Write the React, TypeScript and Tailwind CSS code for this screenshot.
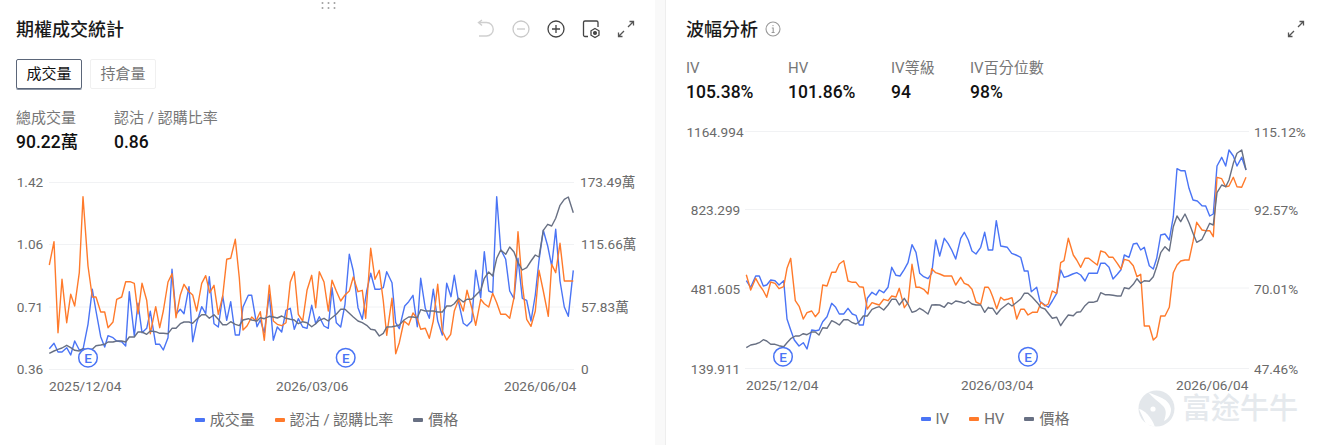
import React from "react";

const BLUE = "#4a74f5";
const ORANGE = "#ff7a2b";
const GRAY = "#687083";

// Traced data: each string is x,y pairs on a 3x grid; ox/oy place it inside the chart.
const pts = (parts: [string, number, number][]) =>
  parts
    .map(([s, ox, oy]) =>
      s
        .trim()
        .split(/\s+/)
        .map((p) => {
          const [x, y] = p.split(",").map(Number);
          return `${(x / 3 + ox).toFixed(1)},${(y / 3 + oy).toFixed(1)}`;
        })
        .join(" ")
    )
    .join(" ");

const L1 = {
  blue: pts([
    ["148,533 162,517 174,543 186,543 200,530 212,552 224,510 238,537 249,535 264,460 277,355 288,420 302,497 314,528 324,494 339,500 350,510 365,512 377,525 388,362 403,495 414,397 426,485 440,472 451,421 467,520 479,520 490,537 504,500 516,295 528,430 541,415 552,428 567,347 578,512 590,455 605,407 617,428 628,317 642,458 655,468 668,375 680,448 692,392 706,492 718,492 729,408 745,373 755,373 771,467 781,447 793,485 808,370 820,508 832,468 845,483 858,418 871,412 883,475 895,443 908,468 921,472 935,403 947,458 958,437 972,465 985,472", 0, 0],
    ["6,350 19,455 32,468 45,400 58,250 70,300 84,410 97,445 110,360 122,307 135,355 148,355 160,350 170,302 186,335 197,455 208,473 224,405 236,392 249,373 262,467 272,322 286,412 298,442 310,355 323,450 337,492 350,337 363,377 373,313 386,395 400,457 411,465 425,450 437,298 452,380 463,242 476,360 488,365 500,77 512,235 527,265 539,360 552,383 564,262 577,382 590,388 603,450 616,372 627,268 640,178 653,225 665,285 677,175 690,330 703,408 715,436 730,298", 330, 0],
  ]),
  orange: pts([
    ["148,282 162,212 174,485 186,325 200,455 212,370 224,405 238,305 249,77 264,285 277,378 288,378 302,423 314,423 324,470 339,453 350,385 365,378 377,332 390,332 403,337 414,428 426,337 440,388 451,488 467,407 479,470 490,420 504,333 516,308 528,440 541,372 552,340 565,360 578,372 590,420 605,337 617,314 629,365 642,343 655,430 668,375 680,265 692,262 706,205 718,320 729,477 741,465 755,438 768,450 781,422 793,508 808,343 820,450 832,460 845,464 858,455 871,333 883,302 895,430 908,450 921,358 935,313 947,410 958,302 972,333 985,420", 0, 0],
    ["6,328 19,360 32,390 45,372 58,360 70,318 84,362 97,358 107,442 122,232 135,325 148,298 160,390 170,493 186,382 197,548 208,515 222,450 236,462 249,426 262,443 272,475 286,472 298,502 310,450 323,340 337,480 350,507 362,490 373,420 386,385 400,420 411,358 425,410 437,463 452,385 463,398 476,408 488,367 500,395 512,430 527,430 539,442 552,380 564,182 577,340 590,445 603,466 616,420 627,298 640,360 655,436 665,280 677,305 690,217 703,330 715,330 730,330", 330, 0],
  ]),
  gray: pts([
    ["148,547 162,540 174,535 186,531 200,523 212,530 224,538 238,540 249,533 264,538 277,535 288,524 302,522 314,520 324,513 339,513 350,510 365,510 377,513 388,498 403,498 414,483 426,483 440,490 451,480 467,482 479,487 490,487 504,488 516,472 528,472 541,458 552,453 567,453 578,457 590,445 605,431 617,431 628,442 642,431 655,445 668,461 680,461 692,452 706,460 718,464 729,447 745,443 755,447 771,450 781,440 793,443 808,436 820,438 832,441 845,435 858,442 871,445 883,447 895,458 908,452 921,455 935,467 947,458 958,448 972,442 985,450", 0, 0],
    ["0,445 19,430 32,415 45,415 58,427 70,438 84,450 97,455 110,463 122,475 135,477 148,495 160,487 170,468 186,467 197,465 208,462 222,447 236,438 249,438 262,440 272,416 286,420 298,420 310,420 323,423 337,423 350,405 363,405 373,398 386,382 400,393 411,385 425,385 437,373 452,358 463,322 476,303 488,315 500,262 512,237 527,250 539,228 552,243 564,275 577,297 590,290 603,270 616,252 627,258 640,178 653,160 665,165 677,142 690,103 703,85 715,78 730,125", 330, 0],
  ]),
};

const R1 = {
  blue: pts([
    ["259,332 272,352 287,318 298,318 310,348 320,345 332,330 345,332 357,345 371,332 381,447 392,480 403,510 417,528 430,518 441,537 455,480 468,482 477,480 488,455 501,440 515,400 527,412 538,432 551,432 564,415 577,432 588,436 598,465 610,465 622,385 636,367 648,375 658,360 671,368 684,352 695,292 708,316 720,318 733,298 744,278 756,224 768,247 779,310 791,320 804,326 815,310 827,210 839,258 853,205 864,220 875,240 887,267 902,205 913,187 925,210 936,243 948,252 962,232 974,187 985,240", -6, 50],
    ["0,390 8,390 19,302 32,378 52,382 65,400 78,405 92,412 103,453 114,453 124,515 140,502 150,545 165,555 175,562 187,543 200,520 212,450 222,472 235,468 248,462 260,458 272,465 285,483 296,460 309,460 322,460 332,430 345,430 357,442 369,477 382,463 393,449 403,405 417,412 430,372 441,370 452,390 463,382 478,437 490,447 500,415 512,345 525,342 538,360 550,290 561,146 572,152 585,152 597,205 609,240 622,243 636,257 647,258 659,288 670,282 681,138 695,112 707,138 717,90 730,108 741,138 755,112 768,150", 324, 0],
  ]),
  orange: pts([
    ["259,314 272,360 287,325 298,345 310,362 320,382 332,336 345,340 357,356 371,350 381,295 392,265 406,392 418,410 430,447 441,428 455,423 466,440 477,427 488,345 501,348 515,307 527,307 538,282 551,272 564,333 577,337 588,337 598,350 610,352 622,417 636,398 648,402 658,405 671,388 684,392 695,378 708,381 718,355 733,413 744,398 756,283 768,352 779,352 791,358 804,372 815,296 827,308 839,312 853,318 864,318 875,318 887,345 902,322 913,340 925,345 936,358 948,396 962,403 974,352 985,352", -6, 50],
    ["0,510 8,530 20,566 32,532 42,540 55,537 66,533 80,597 92,568 103,568 114,585 127,577 142,577 153,547 165,558 175,552 187,513 200,520 212,428 222,422 235,355 250,405 260,420 272,442 285,415 296,415 309,425 322,435 332,393 345,397 357,412 369,412 382,430 393,447 403,418 417,422 430,437 441,470 452,463 463,618 478,618 490,660 500,650 512,588 525,588 538,562 550,458 561,435 572,423 585,420 597,420 609,365 620,307 636,330 647,332 659,332 670,350 681,172 695,176 707,200 717,198 730,172 741,200 755,202 768,172", 324, 0],
  ]),
  gray: pts([
    ["259,533 272,525 287,522 298,518 310,509 320,513 332,523 345,523 357,527 371,530 381,518 392,506 406,498 418,498 430,491 441,494 455,486 466,486 477,495 488,473 501,475 515,452 527,458 538,465 551,449 564,449 577,458 588,462 598,455 610,438 622,438 636,418 648,413 658,410 671,420 684,405 695,388 708,388 718,405 733,385 744,402 756,427 768,423 779,415 791,422 804,432 815,405 827,404 839,405 853,412 864,398 875,402 887,393 902,396 913,400 925,393 936,402 948,405 962,405 974,427 985,412", -6, 50],
    ["0,565 8,565 20,583 32,568 55,550 66,558 80,547 92,537 103,520 114,520 127,532 142,548 153,563 165,567 175,580 187,595 200,592 212,617 222,602 235,585 250,587 260,577 272,575 285,557 296,547 309,547 322,543 332,518 345,524 357,524 369,526 382,528 393,528 403,503 417,506 430,493 441,476 452,490 463,482 478,484 490,470 500,440 512,398 525,380 538,393 550,320 561,288 572,305 585,282 597,308 609,340 620,367 636,358 647,335 659,310 670,315 681,218 695,195 707,200 717,180 730,130 741,100 755,90 768,150", 324, 0],
  ]),
};

type Tick = { x: number; y: number; t: string; a?: "start" | "middle" | "end" };

function Chart({
  w,
  h,
  grid,
  x1,
  x2,
  series,
  ticks,
  marks,
}: {
  w: number;
  h: number;
  grid: number[];
  x1: number;
  x2: number;
  series: { blue: string; orange: string; gray: string };
  ticks: Tick[];
  marks: [number, number][];
}) {
  return (
    <svg width={w} height={h} viewBox={`0 0 ${w} ${h}`} className="block">
      {grid.map((y) => (
        <line key={y} x1={x1} x2={x2} y1={y} y2={y} stroke="#f1f2f4" strokeWidth="1" />
      ))}
      <polyline points={series.blue} fill="none" stroke={BLUE} strokeWidth="1.4" strokeLinejoin="round" />
      <polyline points={series.orange} fill="none" stroke={ORANGE} strokeWidth="1.4" strokeLinejoin="round" />
      <polyline points={series.gray} fill="none" stroke={GRAY} strokeWidth="1.4" strokeLinejoin="round" />
      {marks.map(([x, y]) => (
        <g key={x}>
          <circle cx={x} cy={y} r="9.3" fill="#fff" stroke={BLUE} strokeWidth="1.5" />
          <text x={x} y={y + 4.8} textAnchor="middle" fontSize="13.5" fontWeight="500" fill={BLUE}>
            E
          </text>
        </g>
      ))}
      {ticks.map((k) => (
        <text key={k.t} x={k.x} y={k.y} textAnchor={k.a ?? "start"} fontSize="13.6" fill="#6a6a6a">
          {k.t}
        </text>
      ))}
    </svg>
  );
}

const LEFT_TICKS: Tick[] = [
  { x: 30, y: 16, t: "1.42", a: "middle" },
  { x: 30, y: 78, t: "1.06", a: "middle" },
  { x: 30, y: 141, t: "0.71", a: "middle" },
  { x: 30, y: 203, t: "0.36", a: "middle" },
  { x: 580, y: 16, t: "173.49萬" },
  { x: 581, y: 78, t: "115.66萬" },
  { x: 581, y: 141, t: "57.83萬" },
  { x: 581, y: 203, t: "0" },
  { x: 49, y: 219.5, t: "2025/12/04" },
  { x: 276, y: 219.5, t: "2026/03/06" },
  { x: 504, y: 219.5, t: "2026/06/04" },
];

const RIGHT_TICKS: Tick[] = [
  { x: 49, y: 16.5, t: "1164.994", a: "middle" },
  { x: 49.5, y: 95, t: "823.299", a: "middle" },
  { x: 49.5, y: 173.5, t: "481.605", a: "middle" },
  { x: 49.5, y: 253.5, t: "139.911", a: "middle" },
  { x: 588, y: 17, t: "115.12%" },
  { x: 588, y: 95, t: "92.57%" },
  { x: 588, y: 173.5, t: "70.01%" },
  { x: 588, y: 253.5, t: "47.46%" },
  { x: 80, y: 269.5, t: "2025/12/04" },
  { x: 295, y: 269.5, t: "2026/03/04" },
  { x: 510, y: 269.5, t: "2026/06/04" },
];

function Legend({ items, className }: { items: [string, string][]; className: string }) {
  return (
    <div className={`flex justify-center gap-5 h-[50px] pt-[14px] text-[15px] leading-5 text-[#6e6e6e] ${className}`}>
      {items.map(([c, t]) => (
        <div key={t} className="flex items-center gap-[5px] h-5">
          <span className="block w-[10px] h-1 rounded-[1px]" style={{ background: c }} />
          <span>{t}</span>
        </div>
      ))}
    </div>
  );
}

function Stat({ label, value, className }: { label: string; value: string; className: string }) {
  return (
    <div className={className}>
      <div className="text-[15px] leading-5 text-[#777]">{label}</div>
      <div className="mt-[2px] text-[17.5px] leading-6 font-medium text-[#111]">{value}</div>
    </div>
  );
}

const Expand = () => (
  <svg width="20" height="20" viewBox="0 0 20 20" fill="none" stroke="#555" strokeWidth="1.3">
    <path d="M12 8 L17.5 2.5 M13.5 2.5 H17.5 V6.5" />
    <path d="M8 12 L2.5 17.5 M2.5 13.5 V17.5 H6.5" />
  </svg>
);

export default function App() {
  return (
    <div className="relative flex w-[1319px] h-[445px] overflow-hidden bg-white font-[Roboto,'Noto_Sans_CJK_TC',sans-serif]">
      <section className="relative w-[655px] shrink-0">
        <svg className="absolute left-[320px] top-[1px]" width="18" height="10" viewBox="0 0 18 10" fill="#a0a0a0">
          {[2.5, 8.5, 14.5].flatMap((x) =>
            [2, 7].map((y) => <circle key={`${x}-${y}`} cx={x} cy={y} r="1" />)
          )}
        </svg>
        <header className="flex items-center justify-between h-[58px] pl-4 pr-[19px]">
          <h2 className="text-[18px] font-medium text-[#1a1a1a]">期權成交統計</h2>
          <div className="flex items-center gap-[15px]">
            <svg width="20" height="20" viewBox="0 0 20 20" fill="none" stroke="#cfcfcf" strokeWidth="1.4">
              <path d="M3 17 H10.5 A6.5 6.5 0 0 0 10.5 3.5 H2.5 M6 1 L2.5 3.5 L6 6.5" />
            </svg>
            <svg width="20" height="20" viewBox="0 0 20 20" fill="none" stroke="#c9c9c9" strokeWidth="1.3">
              <circle cx="10" cy="10" r="8" />
              <path d="M6 10 H14" />
            </svg>
            <svg width="20" height="20" viewBox="0 0 20 20" fill="none" stroke="#444" strokeWidth="1.3">
              <circle cx="10" cy="10" r="8" />
              <path d="M6 10 H14 M10 6 V14" />
            </svg>
            <svg width="20" height="20" viewBox="0 0 20 20" fill="none" stroke="#444" strokeWidth="1.3">
              <path d="M7 17.5 H4 A1.5 1.5 0 0 1 2.5 16 V3.5 A1.5 1.5 0 0 1 4 2 H15.5 A1.5 1.5 0 0 1 17 3.5 V8" />
              <path d="M14 9.5 L18 11.8 V16.2 L14 18.5 L10 16.2 V11.8 Z" />
              <circle cx="14" cy="14" r="1.4" fill="#444" />
            </svg>
            <Expand />
          </div>
        </header>
        <div className="flex gap-2 pl-4 h-[31px] mt-[1px]">
          <button className="w-[66px] h-[30px] text-[15px] leading-none text-[#111] rounded-[2px] border border-[#5b6679] shadow-[0_1px_0_#8a93a3]">
            成交量
          </button>
          <button className="w-[66px] h-[30px] text-[15px] leading-none text-[#777] rounded-[2px] border border-[#f0f0f0]">
            持倉量
          </button>
        </div>
        <div className="flex pl-4 pt-[18px] h-[81px]">
          <Stat className="w-[98px]" label="總成交量" value="90.22萬" />
          <Stat className="" label="認沽 / 認購比率" value="0.86" />
        </div>
        <Chart w={655} h={225} grid={[11.5, 73.5, 136, 198.5]} x1={49} x2={574} series={L1} ticks={LEFT_TICKS} marks={[[88, 186.7], [345.7, 186.7]]} />
        <Legend
          className="pr-[2px]"
          items={[
            [BLUE, "成交量"],
            [ORANGE, "認沽 / 認購比率"],
            [GRAY, "價格"],
          ]}
        />
      </section>

      <div className="w-[11px] shrink-0 bg-[#f9f9f9] border-r border-[#eeeeee]" />

      <section className="relative flex-1">
        <header className="flex items-center justify-between h-[58px] pl-5 pr-[13px]">
          <div className="flex items-center gap-[7px]">
            <h2 className="text-[18px] font-medium text-[#1a1a1a]">波幅分析</h2>
            <svg width="16" height="16" viewBox="0 0 16 16" fill="none" stroke="#999" strokeWidth="1.1">
              <circle cx="8" cy="8" r="7" />
              <path d="M6.8 7 H8.2 V11.5 M6.6 11.5 H9.6" />
              <circle cx="8" cy="4.6" r="0.7" fill="#999" stroke="none" />
            </svg>
          </div>
          <Expand />
        </header>
        <div className="flex pl-5 h-[62px]">
          <Stat className="w-[102px]" label="IV" value="105.38%" />
          <Stat className="w-[103px]" label="HV" value="101.86%" />
          <Stat className="w-[79px]" label="IV等級" value="94" />
          <Stat className="" label="IV百分位數" value="98%" />
        </div>
        <Chart
          w={653}
          h={275}
          grid={[11.5, 89.5, 168, 248.5]}
          x1={79}
          x2={583}
          series={R1}
          ticks={RIGHT_TICKS}
          marks={[[117, 236.7], [362, 236.7]]}
        />
        <Legend
          className="pl-[5px]"
          items={[
            [BLUE, "IV"],
            [ORANGE, "HV"],
            [GRAY, "價格"],
          ]}
        />
      </section>

      <div className="absolute left-[1138px] top-[390px] flex items-center gap-[6px] text-[#e5e9ed]">
        <svg width="38" height="38" viewBox="0 0 38 38">
          <circle cx="18.5" cy="18.5" r="18" fill="#e3e7eb" />
          <path d="M10 2 C20 7 31 8 33 19 C33 25 30 29 26 31 C28 25 29 20 25 16 C20 11 15 8 10 2 Z" fill="#fff" />
          <path d="M1 19 C6 20 13 26 17 37 L8 34 Z" fill="#fff" />
          <circle cx="15" cy="19" r="2.6" fill="#fff" />
        </svg>
        <span className="text-[29px] leading-none font-medium whitespace-nowrap">富途牛牛</span>
      </div>
    </div>
  );
}
